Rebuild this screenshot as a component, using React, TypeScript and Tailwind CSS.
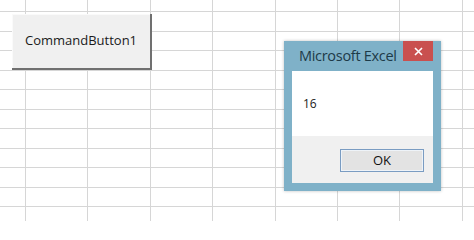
import React from 'react'

const COLS = 9
const ROWS = 12

export default function App() {
  return (
    <div className="relative h-[221px] w-[474px] overflow-hidden bg-white font-['Open_Sans',sans-serif]">
      {/* Sheet grid */}
      <div className="grid h-full w-full grid-cols-[26px_repeat(8,62.4px)] grid-rows-[12px_repeat(11,19.5px)]">
        {Array.from({ length: COLS * ROWS }).map((_, i) => (
          <div key={i} className="border-b border-r border-[#d6d6d6]" />
        ))}
      </div>

      {/* ActiveX command button on the sheet */}
      <button className="absolute left-[12px] top-[14px] flex h-[56px] w-[140px] items-center justify-center border-b-2 border-r-2 border-[#707070] bg-[#f0f0f0] text-[13px] text-[#1a1a1a] shadow-[inset_1px_1px_0_#fafafa]">
        CommandButton1
      </button>

      {/* MsgBox window */}
      <div className="absolute left-[284px] top-[41px] flex h-[150px] w-[157px] flex-col bg-[#7fb1c8] px-[8px] pb-[8px] shadow-[0_0_3px_rgba(0,0,0,0.25)]">
        <div className="flex h-[30px] shrink-0 items-start justify-between">
          <span className="whitespace-nowrap pl-[7px] pt-[5px] text-[14.5px] leading-[20px] tracking-[-0.3px] text-[#1d3a48]">Microsoft Excel</span>
          <button className="flex h-[20px] w-[30px] shrink-0 items-center justify-center bg-[#c9504f] text-white">
            <svg width="9" height="9" viewBox="0 0 9 9" className="stroke-white" strokeWidth="1.6">
              <path d="M1 1L8 8M8 1L1 8" />
            </svg>
          </button>
        </div>
        <div className="flex h-[65px] items-center bg-white pl-[11px] text-[12px] text-[#1a1a1a]">16</div>
        <div className="flex flex-1 items-start justify-end bg-[#f0f0f0] pr-[9px] pt-[13px]">
          <button className="flex h-[23px] w-[84px] items-center justify-center border border-[#7a9cc2] bg-[#e3e3e3] text-[13px] text-[#111] shadow-[inset_0_0_0_1px_#eef3f8]">
            OK
          </button>
        </div>
      </div>
    </div>
  )
}
